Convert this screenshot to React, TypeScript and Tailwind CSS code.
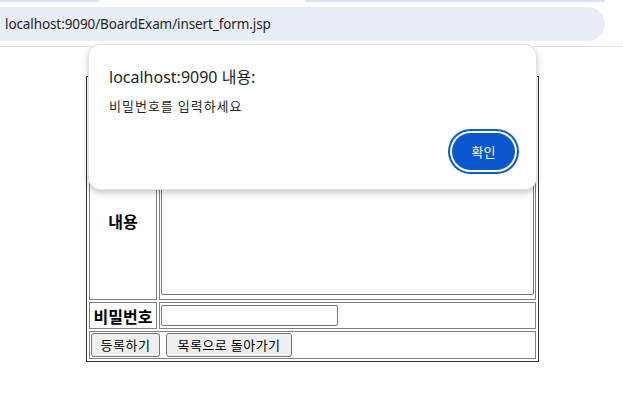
import React from "react";

const kr = { fontFamily: '"Noto Sans CJK KR", "Noto Sans", sans-serif' };
const ui = { fontFamily: '"Noto Sans", "Noto Sans CJK KR", sans-serif' };

export default function App() {
  return (
    <div className="relative w-[623px] h-[398px] overflow-hidden bg-white">
      {/* tab strip remnants */}
      <div className="flex h-[2px]">
        <div className="w-[100px] bg-[#d3e3fd] rounded-br-[2px]" />
        <div className="w-[205px]" />
        <div className="w-[300px] bg-[#d3e3fd] rounded-bl-[2px] rounded-br-[2px]" />
      </div>
      {/* address bar */}
      <div className="mt-[5px] h-[34px] w-[605px] rounded-r-full bg-[#e9edf7] flex items-center pl-[5px]">
        <span className="text-[13.5px] text-[#1f1f1f] tracking-[-0.1px]" style={ui}>
          localhost:9090/BoardExam/insert_form.jsp
        </span>
      </div>
      <div className="mt-[5px] h-px bg-[#e3e3e3]" />

      {/* page content: form table */}
      <div className="pl-[86px] pt-[29px]" style={kr}>
        <table className="w-[453px] border-separate border-spacing-[2px] border border-[#333333] text-black">
          <tbody>
            <tr className="h-[27px]">
              <td className="w-[68px] border border-[#808080] p-px" />
              <td className="border border-[#808080] p-px">
                <input className="block w-[177px] h-[20px] border border-[#767676] rounded-[2px]" />
              </td>
            </tr>
            <tr className="h-[27px]">
              <td className="border border-[#808080] p-px" />
              <td className="border border-[#808080] p-px">
                <input className="block w-[177px] h-[20px] border border-[#767676] rounded-[2px]" />
              </td>
            </tr>
            <tr className="h-[163px]">
              <td className="border border-[#808080] text-center font-bold text-[16px] p-px align-middle">
                <span className="relative top-[2px]">내용</span>
              </td>
              <td className="border border-[#808080] p-px align-bottom">
                <textarea className="block w-[373px] h-[154px] mb-[3px] border border-[#767676] rounded-[2px] resize-none" />
              </td>
            </tr>
            <tr className="h-[27px]">
              <td className="border border-[#808080] text-center font-bold text-[16px] leading-[20px] p-0">비밀번호</td>
              <td className="border border-[#808080] p-px">
                <input type="password" className="block w-[177px] h-[21px] border border-[#767676] rounded-[2px]" />
              </td>
            </tr>
            <tr className="h-[28px]">
              <td colSpan={2} className="border border-[#808080] p-px">
                <div className="flex gap-[6px]">
                  <button className="w-[69px] h-[24px] bg-[#efefef] border border-[#767676] rounded-[3px] text-[13px] tracking-[0.5px] text-black flex items-center justify-center" style={kr}>
                    등록하기
                  </button>
                  <button className="w-[126px] h-[24px] bg-[#efefef] border border-[#767676] rounded-[3px] text-[13px] tracking-[0.5px] text-black flex items-center justify-center" style={kr}>
                    목록으로 돌아가기
                  </button>
                </div>
              </td>
            </tr>
          </tbody>
        </table>
      </div>

      {/* alert dialog */}
      <div className="absolute left-[88px] top-[44px] w-[449px] h-[146px] rounded-[12px] bg-white border border-[#e2e2e2] shadow-[0_3px_6px_rgba(0,0,0,0.22)] flex flex-col px-[20px] pt-[21px]">
        <div className="text-[16px] leading-[20px] text-[#1f1f1f]" style={ui}>
          localhost:9090 <span style={kr}>내용:</span>
        </div>
        <div className="mt-[11px] text-[13px] leading-[16px] tracking-[1px] text-[#1f1f1f]" style={kr}>
          비밀번호를 입력하세요
        </div>
        <div className="mt-[19px] flex justify-end pr-[1px]">
          <button
            className="w-[63px] h-[37px] rounded-full bg-[#0b57d0] text-white text-[13px] flex items-center justify-center shadow-[0_0_0_2px_#ffffff,0_0_0_4px_#0b57d0]"
            style={kr}
          >
            확인
          </button>
        </div>
      </div>
    </div>
  );
}
